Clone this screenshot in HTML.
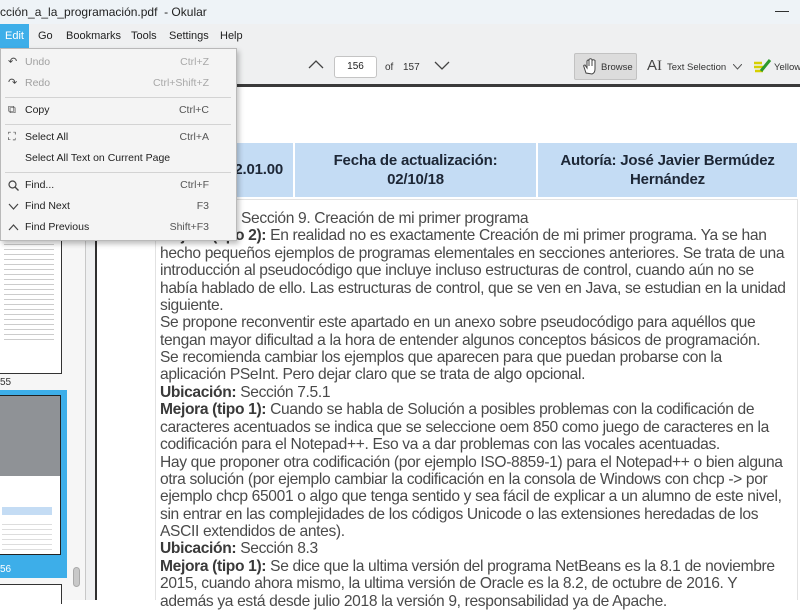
<!DOCTYPE html>
<html><head><meta charset="utf-8"><style>
*{margin:0;padding:0;box-sizing:border-box}
body{width:800px;height:600px;overflow:hidden;position:relative;background:#fff;font-family:"Liberation Sans",sans-serif}
.abs{position:absolute}
#title{left:0;top:0;width:800px;height:24px;background:#eef3f7;font-size:12px;color:#222;line-height:24px}
#menubar{left:0;top:24px;width:800px;height:24px;background:#eff0f1;font-size:11px;color:#222}
#menubar span{position:absolute;top:0;line-height:24px}
#toolbar{left:0;top:48px;width:800px;height:39px;background:#eff0f1;border-bottom:3px solid #3a3a3a}
#side{left:0;top:90px;width:86px;height:510px;background:#f6f6f6;border-right:1px solid #c8c8c8}
#gap{left:86px;top:90px;width:9px;height:510px;background:#eff0f1}
#sep{left:95px;top:87px;width:2px;height:513px;background:#2f2f2f}
#page{left:97px;top:90px;width:703px;height:510px;background:#fff}
.menu{left:0;top:48px;width:237px;height:193px;background:#f4f4f4;border:1px solid #b9b9b9;box-shadow:2px 3px 5px rgba(0,0,0,.25);font-size:10.5px;color:#222}
.mi{position:absolute;left:0;width:235px;height:20px;line-height:20px}
.mi .t{position:absolute;left:24px}
.mi .k{position:absolute;right:27px;color:#555}
.mi .ic{position:absolute;left:7px;top:0;font-size:11px;color:#444}
.dis{color:#a0a0a0}.dis .k{color:#a8a8a8}
.hr{position:absolute;left:4px;width:226px;height:1px;background:#d3d3d3}
.tl{position:absolute;left:160px;font-size:15.6px;color:#4a4a4a;white-space:nowrap;letter-spacing:-0.35px;line-height:17px}
b{color:#3a3a3a}
.cell{position:absolute;top:143px;height:54px;background:#c4dcf4;font-weight:bold;font-size:15px;color:#1d2736;text-align:center;line-height:19px;letter-spacing:-.2px}
</style></head><body>
<div id="title" class="abs"><span style="position:absolute;left:0">cción_a_la_programación.pdf&nbsp; - Okular</span><span style="position:absolute;left:775px;top:-2px;font-size:14px">—</span></div>
<div id="menubar" class="abs">
<span style="left:0;width:29px;background:#3daee9;color:#fff;padding-left:5px">Edit</span>
<span style="left:38px">Go</span><span style="left:66px">Bookmarks</span><span style="left:131px">Tools</span><span style="left:169px">Settings</span><span style="left:220px">Help</span></div>
<div id="toolbar" class="abs">
<svg class="abs" style="left:308px;top:12px" width="16" height="10"><path d="M1 8 L8 1 L15 8" fill="none" stroke="#444" stroke-width="1.3"/></svg>
<div class="abs" style="left:334px;top:8px;width:43px;height:22px;background:#fff;border:1px solid #c4c4c4;border-radius:3px;font-size:10px;text-align:center;line-height:20px;color:#222">156</div>
<span class="abs" style="left:385px;top:14px;font-size:10px;color:#333">of</span>
<span class="abs" style="left:403px;top:14px;font-size:10px;color:#333">157</span>
<svg class="abs" style="left:434px;top:13px" width="16" height="10"><path d="M1 1 L8 8 L15 1" fill="none" stroke="#444" stroke-width="1.3"/></svg>
<div class="abs" style="left:574px;top:5px;width:63px;height:27px;background:#dcdcdc;border:1px solid #c2c2c2;border-radius:2px"></div>
<svg class="abs" style="left:582px;top:10px" width="16" height="17"><path d="M4 15 L2 9 Q1 7 3 7 L5 10 L5 3 Q6 1 7 3 L7 8 L7 1.5 Q8.5 0 10 1.5 L10 8 L10 2.5 Q11.5 1 13 2.5 L13 11 Q13 15 10 16 Z" fill="#fff" stroke="#444" stroke-width="1"/></svg>
<span class="abs" style="left:601px;top:14px;font-size:9.5px;color:#333">Browse</span>
<span class="abs" style="left:647px;top:9px;font-size:15px;color:#444">A<span style="font-family:'Liberation Serif'">I</span></span>
<span class="abs" style="left:667px;top:14px;font-size:9.5px;color:#333">Text Selection</span>
<svg class="abs" style="left:733px;top:16px" width="9" height="6"><path d="M0 0 L4.5 5 L9 0" fill="none" stroke="#555"/></svg>
<svg class="abs" style="left:752px;top:10px" width="20" height="16"><path d="M2 5h8M2 9h9M3 13h8" stroke="#d6d000" stroke-width="2.5"/><path d="M9 13 L18 2" stroke="#2c9a2c" stroke-width="3"/></svg>
<span class="abs" style="left:774px;top:14px;font-size:9.5px;color:#333">Yellow</span>
</div>
<div id="side" class="abs">
<div class="abs" style="left:0;top:0;width:62px;height:284px;background:#fff;border:1px solid #333;border-top:none;border-left:none"></div>
<div class="abs" style="left:4px;top:150px;width:50px;height:100px;background:repeating-linear-gradient(#fff 0 4px,#ccc 4px 5px)"></div>
<span class="abs" style="left:0;top:287px;font-size:10px;color:#333">55</span>
<div class="abs" style="left:0;top:300px;width:67px;height:188px;background:#3daee9"></div>
<div class="abs" style="left:0;top:305px;width:61px;height:160px;background:#fff;border:1px solid #222;border-left:none"></div>
<div class="abs" style="left:0;top:306px;width:60px;height:80px;background:#8f9296"></div>
<div class="abs" style="left:2px;top:417px;width:50px;height:8px;background:#c4dcf4"></div>
<div class="abs" style="left:2px;top:430px;width:50px;height:30px;background:repeating-linear-gradient(#fff 0 4px,#ddd 4px 5px)"></div>
<span class="abs" style="left:0;top:474px;font-size:10px;color:#fff">56</span>
<div class="abs" style="left:0;top:494px;width:62px;height:20px;background:#fff;border:1px solid #333;border-left:none;border-bottom:none"></div>
<div class="abs" style="left:73px;top:477px;width:7px;height:20px;background:#c9c9c9;border:1px solid #aaa;border-radius:4px"></div>
</div>
<div id="gap" class="abs"></div>
<div id="sep" class="abs"></div>
<div id="page" class="abs"></div>
<div class="cell" style="left:150px;width:143px;line-height:54px;text-align:right;padding-right:10px">2.01.00</div>
<div class="cell" style="left:295px;width:241px;padding-top:8px">Fecha de actualización:<br>02/10/18</div>
<div class="cell" style="left:538px;width:259px;padding-top:8px">Autoría: José Javier Bermúdez<br>Hernández</div>
<div class="abs" style="left:155px;top:199px;width:643px;height:401px;border:1px solid #e2e2e2;border-bottom:none"></div>
<div class="tl" style="top:210px;left:241px">Sección 9. Creación de mi primer programa</div>
<div class="tl" style="top:227px"><b>Mejora (tipo 2):</b> En realidad no es exactamente Creación de mi primer programa. Ya se han</div>
<div class="tl" style="top:245px">hecho pequeños ejemplos de programas elementales en secciones anteriores. Se trata de una</div>
<div class="tl" style="top:262px">introducción al pseudocódigo que incluye incluso estructuras de control, cuando aún no se</div>
<div class="tl" style="top:280px">había hablado de ello. Las estructuras de control, que se ven en Java, se estudian en la unidad</div>
<div class="tl" style="top:297px">siguiente.</div>
<div class="tl" style="top:314px">Se propone reconventir este apartado en un anexo sobre pseudocódigo para aquéllos que</div>
<div class="tl" style="top:332px">tengan mayor dificultad a la hora de entender algunos conceptos básicos de programación.</div>
<div class="tl" style="top:349px">Se recomienda cambiar los ejemplos que aparecen para que puedan probarse con la</div>
<div class="tl" style="top:366px">aplicación PSeInt. Pero dejar claro que se trata de algo opcional.</div>
<div class="tl" style="top:384px"><b>Ubicación:</b> Sección 7.5.1</div>
<div class="tl" style="top:401px"><b>Mejora (tipo 1):</b> Cuando se habla de Solución a posibles problemas con la codificación de</div>
<div class="tl" style="top:419px">caracteres acentuados se indica que se seleccione oem 850 como juego de caracteres en la</div>
<div class="tl" style="top:436px">codificación para el Notepad++. Eso va a dar problemas con las vocales acentuadas.</div>
<div class="tl" style="top:454px">Hay que proponer otra codificación (por ejemplo ISO-8859-1) para el Notepad++ o bien alguna</div>
<div class="tl" style="top:471px">otra solución (por ejemplo cambiar la codificación en la consola de Windows con chcp -&gt; por</div>
<div class="tl" style="top:488px">ejemplo chcp 65001 o algo que tenga sentido y sea fácil de explicar a un alumno de este nivel,</div>
<div class="tl" style="top:506px">sin entrar en las complejidades de los códigos Unicode o las extensiones heredadas de los</div>
<div class="tl" style="top:523px">ASCII extendidos de antes).</div>
<div class="tl" style="top:540px"><b>Ubicación:</b> Sección 8.3</div>
<div class="tl" style="top:558px"><b>Mejora (tipo 1):</b> Se dice que la ultima versión del programa NetBeans es la 8.1 de noviembre</div>
<div class="tl" style="top:575px">2015, cuando ahora mismo, la ultima versión de Oracle es la 8.2, de octubre de 2016. Y</div>
<div class="tl" style="top:593px">además ya está desde julio 2018 la versión 9, responsabilidad ya de Apache.</div>
<div class="abs menu">
<div class="mi dis" style="top:3px"><span class="ic">↶</span><span class="t">Undo</span><span class="k">Ctrl+Z</span></div>
<div class="mi dis" style="top:24px"><span class="ic">↷</span><span class="t">Redo</span><span class="k">Ctrl+Shift+Z</span></div>
<div class="hr" style="top:48px"></div>
<div class="mi" style="top:51px"><span class="ic">⧉</span><span class="t">Copy</span><span class="k">Ctrl+C</span></div>
<div class="hr" style="top:75px"></div>
<div class="mi" style="top:78px"><span class="ic">⛶</span><span class="t">Select All</span><span class="k">Ctrl+A</span></div>
<div class="mi" style="top:99px"><span class="t">Select All Text on Current Page</span></div>
<div class="hr" style="top:123px"></div>
<div class="mi" style="top:126px"><svg class="ic" style="top:5px" width="11" height="11"><circle cx="4.5" cy="4.5" r="3.5" fill="none" stroke="#444" stroke-width="1.2"/><path d="M7 7l3.5 3.5" stroke="#444" stroke-width="1.3"/></svg><span class="t">Find...</span><span class="k">Ctrl+F</span></div>
<div class="mi" style="top:147px"><svg class="ic" style="top:7px" width="11" height="7"><path d="M1 1l4.5 5 4.5-5" fill="none" stroke="#444" stroke-width="1.2"/></svg><span class="t">Find Next</span><span class="k">F3</span></div>
<div class="mi" style="top:168px"><svg class="ic" style="top:7px" width="11" height="7"><path d="M1 6l4.5-5 4.5 5" fill="none" stroke="#444" stroke-width="1.2"/></svg><span class="t">Find Previous</span><span class="k">Shift+F3</span></div>
</div>
</body></html>
